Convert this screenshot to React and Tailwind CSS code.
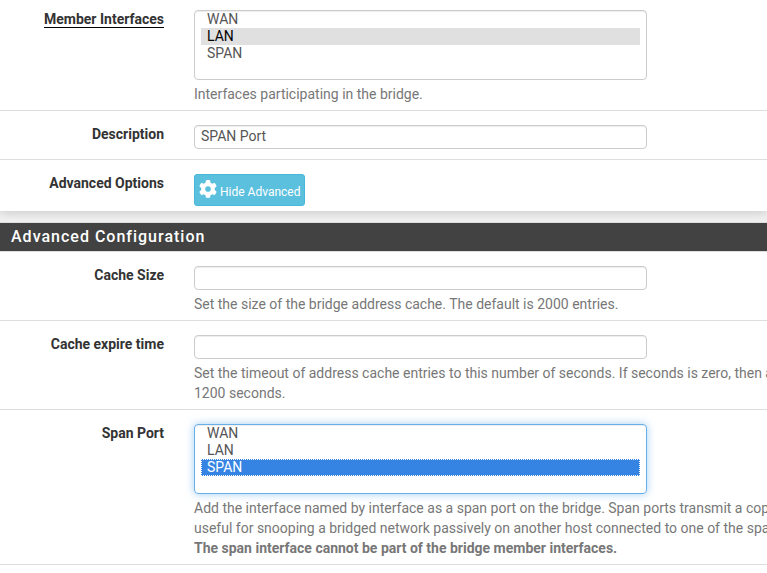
import { FaGear } from "react-icons/fa6";

function Row({ label, underlined, last, className = "", children }) {
  return (
    <div className={`flex items-start ${last ? "" : "border-b border-[#dedede]"} ${className}`}>
      <div className="w-[164px] shrink-0 -mt-px text-right font-bold text-[#333333]">
        <span className={underlined ? "inline-block h-[19px] border-b border-black" : ""}>{label}</span>
      </div>
      <div className="ml-[30px] w-[600px] shrink-0">{children}</div>
    </div>
  );
}

function TextInput({ value = "" }) {
  return (
    <input
      type="text"
      readOnly
      value={value}
      className="block h-6 w-[453px] rounded border border-[#cccccc] bg-white px-1.5 pb-0.5 text-sm text-[#555555] shadow-[inset_0_1px_1px_rgba(0,0,0,0.075)] outline-none"
    />
  );
}

function ListBox({ selected, focused }) {
  return (
    <div
      role="listbox"
      className={`h-[70px] w-[453px] rounded border px-1.5 leading-[17px] ${
        focused
          ? "border-[#66afe9] shadow-[inset_0_1px_1px_rgba(0,0,0,0.075),0_0_8px_rgba(102,175,233,0.6)]"
          : "border-[#cccccc] shadow-[inset_0_1px_1px_rgba(0,0,0,0.075)]"
      }`}
    >
      {["WAN", "LAN", "SPAN"].map((name) => {
        const active = name === selected;
        const tone = !active
          ? "text-[#555555]"
          : focused
            ? "bg-[#3584e4] text-white outline-1 -outline-offset-1 outline-dotted outline-white"
            : "bg-[#e0e0e0] text-black";
        return (
          <div key={name} role="option" aria-selected={active} className={`h-[17px] px-1.5 ${tone}`}>
            {name}
          </div>
        );
      })}
    </div>
  );
}

function Help({ children }) {
  return <div className="mt-1 whitespace-nowrap text-[#777777]">{children}</div>;
}

export default function App() {
  return (
    <div className="h-[573px] w-[767px] overflow-hidden bg-[#f0f0f0] font-[Roboto,sans-serif] text-sm leading-5">
      <section className="h-[211px] bg-white shadow-[0_1px_10px_rgba(0,0,0,0.18)]">
        <Row label="Member Interfaces" underlined className="h-[111px] pt-2.5">
          <ListBox selected="LAN" />
          <Help>Interfaces participating in the bridge.</Help>
        </Row>
        <Row label="Description" className="h-[49px] pt-3.5">
          <TextInput value="SPAN Port" />
        </Row>
        <Row label="Advanced Options" last className="h-[51px] pt-3.5">
          <button className="flex h-8 w-[111px] items-center rounded-[3px] border border-[#46b8da] bg-[#5bc0de] pl-1 text-xs text-white">
            <FaGear className="mr-[3px] -mt-0.5 size-[18px]" />
            <span className="mt-1 whitespace-nowrap">Hide Advanced</span>
          </button>
        </Row>
      </section>
      <section className="mt-[11px] h-[400px] border-t border-[#dddddd] bg-white">
        <h2 className="h-[29px] border-b border-[#dddddd] bg-[#424242] pl-[11px] text-base font-medium leading-7 tracking-[1px] text-white">
          Advanced Configuration
        </h2>
        <Row label="Cache Size" className="h-[69px] pt-3.5">
          <TextInput />
          <Help>Set the size of the bridge address cache. The default is 2000 entries.</Help>
        </Row>
        <Row label="Cache expire time" className="h-[89px] pt-3.5">
          <TextInput />
          <Help>
            Set the timeout of address cache entries to this number of seconds. If seconds is zero, then address
            <br />
            1200 seconds.
          </Help>
        </Row>
        <Row label="Span Port" className="h-[155px] pt-3.5">
          <ListBox selected="SPAN" focused />
          <Help>
            Add the interface named by interface as a span port on the bridge. Span ports transmit a copy of
            <br />
            useful for snooping a bridged network passively on another host connected to one of the span ports
            <br />
            <b>The span interface cannot be part of the bridge member interfaces.</b>
          </Help>
        </Row>
      </section>
    </div>
  );
}
